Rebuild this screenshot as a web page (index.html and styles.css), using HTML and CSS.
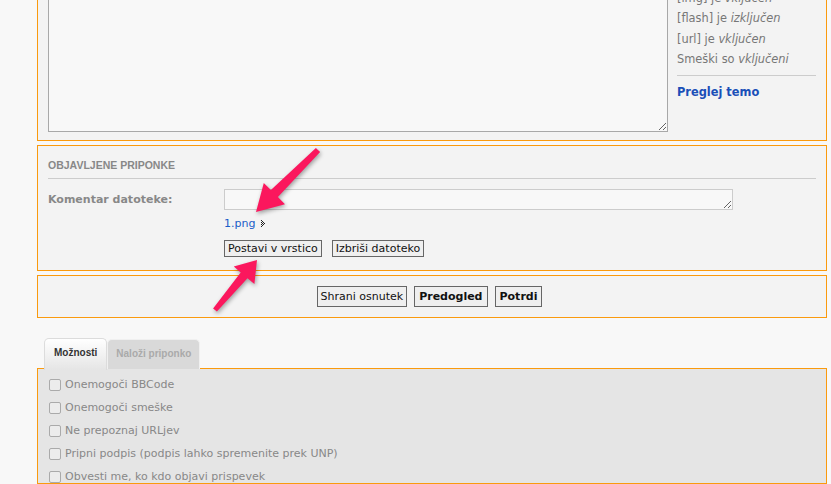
FILE: index.html
```html
<!DOCTYPE html>
<html lang="sl">
<head>
    <meta charset="UTF-8">
    <meta name="viewport" content="width=device-width, initial-scale=1.0">
    <title>Objavi odgovor</title>
    <link rel="stylesheet" href="styles.css">
</head>
<body>
    <div class="page">
        <!-- Message box -->
        <div class="panel panel-post">
            <textarea class="message-box"></textarea>
            <div class="post-side">
                <div class="status-line">BBCode je <em>vključen</em></div>
                <div class="status-line">[img] je <em>vključen</em></div>
                <div class="status-line">[flash] je <em>izključen</em></div>
                <div class="status-line">[url] je <em>vključen</em></div>
                <div class="status-line">Smeški so <em>vključeni</em></div>
                <hr class="side-rule">
                <a class="topic-link" href="#">Preglej temo</a>
            </div>
        </div>

        <!-- Posted attachments -->
        <div class="panel panel-attach">
            <h3 class="panel-title">Objavljene priponke</h3>
            <div class="attach-row">
                <label class="attach-label" for="comment">Komentar datoteke:</label>
                <div class="attach-fields">
                    <textarea id="comment" class="comment-box"></textarea>
                    <div class="file-line">
                        <a class="file-link" href="#">1.png</a>
                        <svg class="file-arrow" width="5" height="7" viewBox="0 0 5 7">
                            <path d="M0 0h1v1H0zM1 1h1v1H1zM2 2h1v1H2zM3 3h1v1H3zM2 4h1v1H2zM1 5h1v1H1zM0 6h1v1H0zM0 2h1v1H0zM1 3h1v1H1zM0 4h1v1H0z" fill="#222"/>
                        </svg>
                    </div>
                    <div class="attach-buttons">
                        <button class="btn">Postavi v vrstico</button>
                        <button class="btn">Izbriši datoteko</button>
                    </div>
                </div>
            </div>
        </div>

        <!-- Submit buttons -->
        <div class="panel panel-submit">
            <button class="btn btn-big">Shrani osnutek</button>
            <button class="btn btn-big btn-bold">Predogled</button>
            <button class="btn btn-big btn-bold">Potrdi</button>
        </div>

        <!-- Options tabs -->
        <div class="tabs">
            <div class="tab active">Možnosti</div>
            <div class="tab">Naloži priponko</div>
        </div>
        <div class="panel panel-options">
            <label class="option"><input type="checkbox"> Onemogoči BBCode</label>
            <label class="option"><input type="checkbox"> Onemogoči smeške</label>
            <label class="option"><input type="checkbox"> Ne prepoznaj URLjev</label>
            <label class="option"><input type="checkbox"> Pripni podpis (podpis lahko spremenite prek UNP)</label>
            <label class="option"><input type="checkbox"> Obvesti me, ko kdo objavi prispevek</label>
        </div>
    </div>

    <!-- Annotation arrows -->
    <svg class="arrows" width="831" height="484" viewBox="0 0 831 484">
        <polygon points="315.9,147.9 270.9,190.1 263.8,183 256,212 285,204.2 277.9,197.1 320.1,152.1" />
        <polygon points="213.1,308.4 240.7,272.4 233.8,266.6 257,260 254.4,284 247.5,278.2 216.9,311.6" />
    </svg>
</body>
</html>
```

FILE: styles.css
```css
body {
    font-family: "DejaVu Sans", Verdana, sans-serif;
    font-size: 11px;
    margin: 0;
    padding: 0;
    background-color: #f8f8f8;
    color: #333;
    overflow: hidden;
    height: 484px;
    position: relative;
}

.page {
    margin-left: 37px;
    width: 790px;
}

.panel {
    border: 1px solid #fa9a0e;
    background-color: #f3f3f3;
    box-sizing: border-box;
}

/* Message box */
.panel-post {
    margin-top: -44px;
    padding: 10px 10px 8px 10px;
    display: flex;
    gap: 9px;
}

.message-box {
    width: 620px;
    height: 165px;
    margin: 0;
    padding: 3px;
    box-sizing: border-box;
    border: 1px solid #a8a8a8;
    background-color: #f8f8f8;
    display: block;
}

.post-side {
    flex: 1;
    color: #777;
    font-size: 11.4px;
}

.status-line {
    line-height: 20.5px;
    white-space: nowrap;
}

.status-line em {
    font-style: italic;
}

.side-rule {
    border: 0;
    border-top: 1px solid #ccc;
    margin: 5px 0 8px 0;
}

.topic-link {
    display: block;
    line-height: 16px;
    font-weight: bold;
    color: #1a4fb8;
    text-decoration: none;
}

/* Attachments */
.panel-attach {
    margin-top: 4px;
    padding: 12px 10px 13px 10px;
}

.panel-title {
    margin: 0 0 6px 0;
    font-family: "Liberation Sans", Arial, sans-serif;
    font-size: 10.5px;
    font-weight: bold;
    line-height: 15px;
    text-transform: uppercase;
    color: #888;
    border-bottom: 1px solid #ccc;
    height: 21px;
    box-sizing: border-box;
}

.attach-row {
    display: flex;
    margin-top: 10px;
}

.attach-label {
    width: 176px;
    font-weight: bold;
    color: #888;
    line-height: 21px;
}

.comment-box {
    width: 509px;
    height: 21px;
    margin: 0;
    padding: 2px;
    box-sizing: border-box;
    border: 1px solid #ccc;
    background-color: #f8f8f8;
    display: block;
}

.file-line {
    display: flex;
    align-items: center;
    gap: 6px;
    height: 14px;
    margin-top: 6px;
}

.file-link {
    color: #1a5cc8;
    text-decoration: none;
}

.attach-buttons {
    display: flex;
    gap: 10px;
    margin-top: 10px;
}

.btn {
    font-family: "DejaVu Sans", Verdana, sans-serif;
    font-size: 11px;
    color: #111;
    background-color: #efefef;
    border: 1px solid #666;
    padding: 0 3px;
    height: 17px;
    line-height: 15px;
    margin: 0;
    border-radius: 0;
}

/* Submit row */
.panel-submit {
    margin-top: 4px;
    padding: 10px 15px 10px 10px;
    display: flex;
    justify-content: center;
    gap: 7px;
}

.btn-big {
    height: 21px;
    line-height: 19px;
}

.btn-bold {
    font-weight: bold;
    padding: 0 4px;
}

/* Tabs */
.tabs {
    display: flex;
    margin-top: 20px;
    margin-left: 7px;
    height: 31px;
    position: relative;
    z-index: 1;
}

.tab {
    font-family: "Liberation Sans", Arial, sans-serif;
    font-size: 10px;
    font-weight: bold;
    color: #aaa;
    background-color: #d9d9d9;
    border: 1px solid #f0f0f0;
    border-bottom: 0;
    border-radius: 5px 5px 0 0;
    padding: 0 8px;
    height: 29px;
    line-height: 27px;
    margin-top: 1px;
}

.tab.active {
    color: #333;
    background: linear-gradient(#ffffff, #e5e5e5);
    border-color: #dcdcdc;
    height: 31px;
    margin-top: 0;
    padding: 0 9px;
}

/* Options */
.panel-options {
    background-color: #e5e5e5;
    margin-top: -1px;
    padding: 4px 11px 0 11px;
    height: 116px;
}

.option {
    display: flex;
    align-items: center;
    gap: 4px;
    height: 23px;
    font-size: 11px;
    color: #888;
}

.option input {
    appearance: none;
    width: 12px;
    height: 12px;
    margin: 0;
    border: 1px solid #aaa;
    border-radius: 2px;
    background-color: #ececec;
    box-sizing: border-box;
}

/* Annotation arrows */
.arrows {
    position: absolute;
    top: 0;
    left: 0;
    pointer-events: none;
    fill: #fb175d;
    filter: drop-shadow(1px 2px 2px rgba(0, 0, 0, 0.35));
}
```
